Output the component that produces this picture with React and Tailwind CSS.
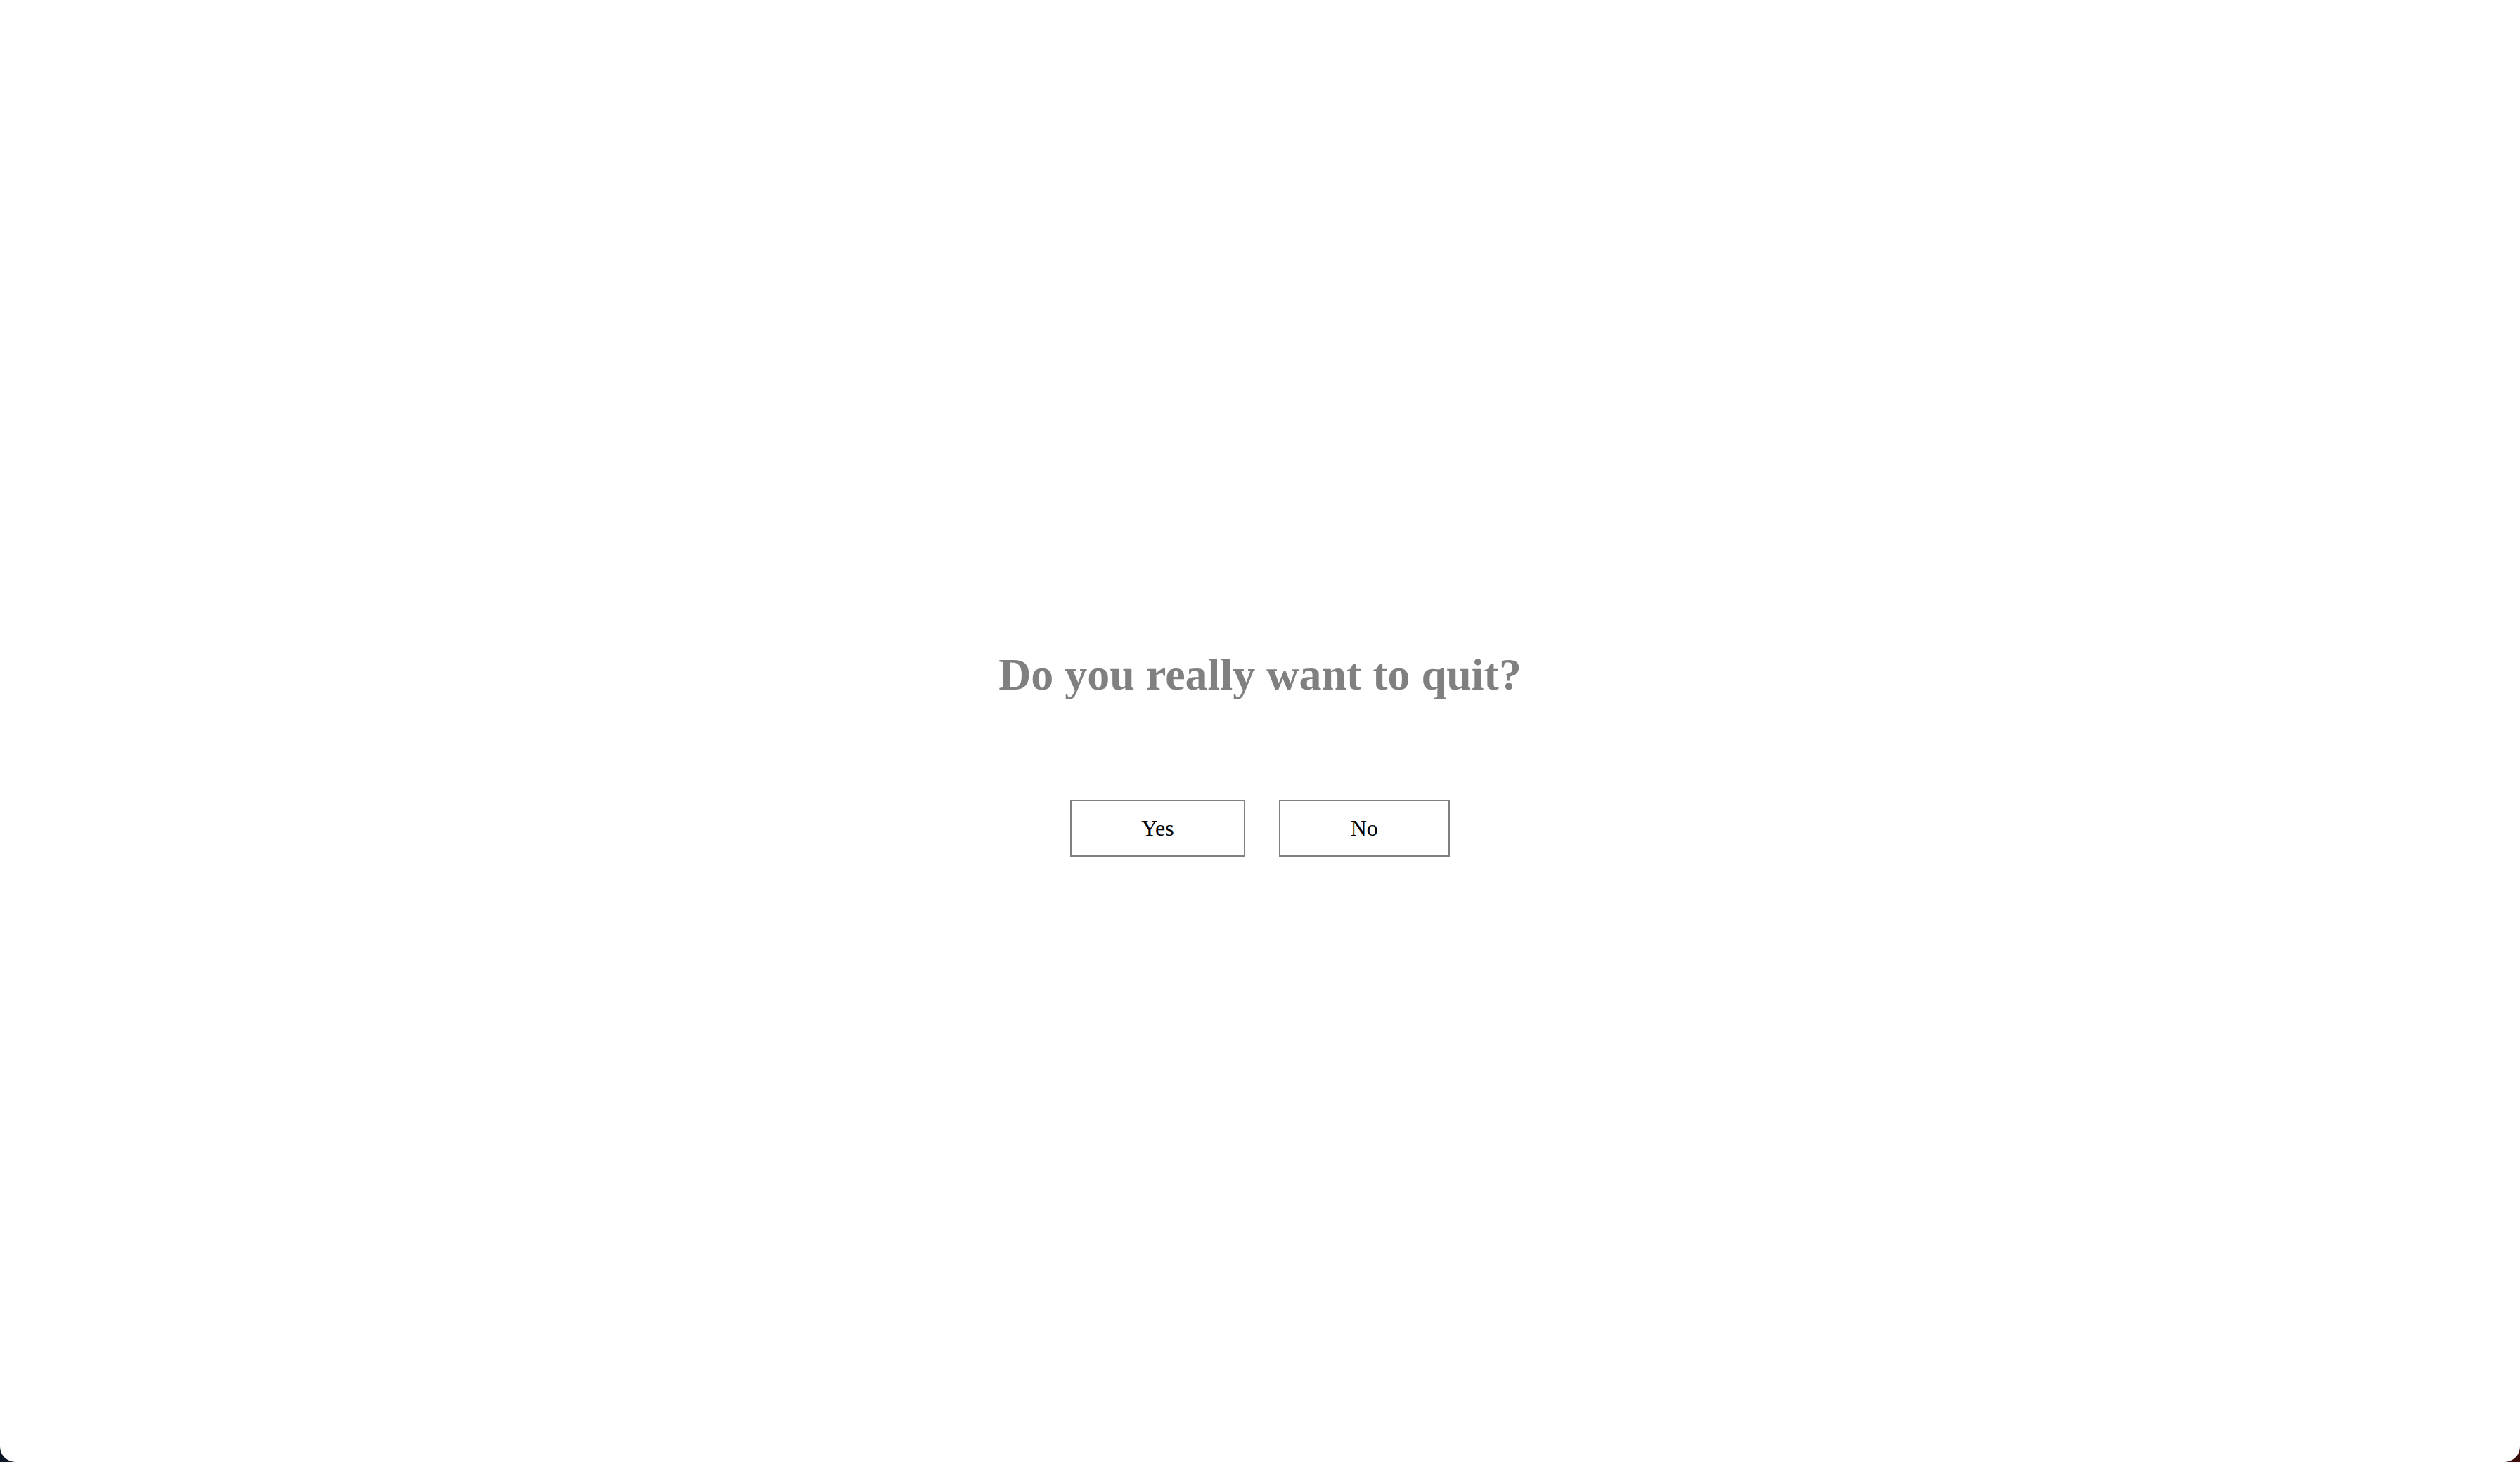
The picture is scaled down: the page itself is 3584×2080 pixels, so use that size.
import React from 'react';

function QuitDialog() {
  const answer = (choice) => {
    console.log('quit answer:', choice);
  };

  return (
    <div className="flex flex-col items-center">
      <h1 className="text-[64px] leading-[1.15] font-bold text-[#808080] font-['Liberation_Serif','Times_New_Roman',serif]">
        Do you really want to quit?
      </h1>
      <div className="mt-[142px] flex gap-[48px]">
        <button
          className="border-2 border-[#808080] bg-white px-[99px] py-[20px] text-[32px] leading-[1.15] text-black font-['Liberation_Serif','Times_New_Roman',serif]"
          onClick={() => answer('yes')}
        >
          Yes
        </button>
        <button
          className="border-2 border-[#808080] bg-white px-[100px] py-[20px] text-[32px] leading-[1.15] text-black font-['Liberation_Serif','Times_New_Roman',serif]"
          onClick={() => answer('no')}
        >
          No
        </button>
      </div>
    </div>
  );
}

export default function App() {
  return (
    <div className="h-[2080px] w-full bg-gradient-to-r from-[#0b1626] to-[#3a0d08]">
      <div className="flex h-full w-full flex-col items-center justify-center rounded-b-[22px] bg-white pt-[62px]">
        <QuitDialog />
      </div>
    </div>
  );
}
